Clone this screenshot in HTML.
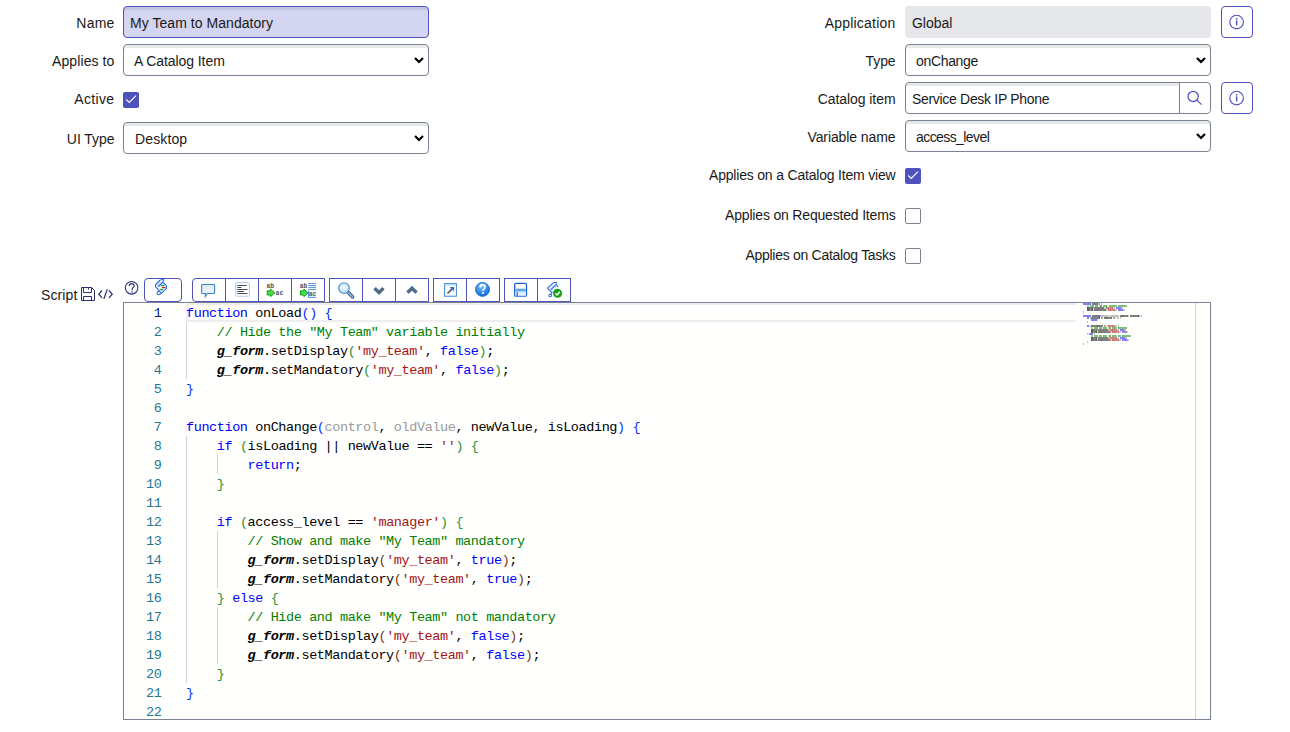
<!DOCTYPE html>
<html><head><meta charset="utf-8"><style>
html,body{margin:0;padding:0;background:#fff;width:1290px;height:732px;overflow:hidden;position:relative}
body{font-family:"Liberation Sans",sans-serif;color:#1e1e1e}
.t{position:absolute;font-size:14px;line-height:16px;height:16px;white-space:nowrap;color:#1a1a1a}
.r{text-align:right}
.box{position:absolute;box-sizing:border-box;border:1px solid #7b8292;border-radius:4px;background:#fff;box-shadow:inset 0 3px 0 #e8e9e9}
.chev{position:absolute;width:12px;height:8px}
.cb{position:absolute;box-sizing:border-box;width:16px;height:16px;border-radius:2px}
.cb.on{background:#4f52bd}
.cb.off{border:1px solid #7b8292;background:#fff}
.ibtn{position:absolute;box-sizing:border-box;width:32px;height:32px;border:1px solid #4f52bd;border-radius:4px;background:#fff}
.tb{position:absolute;top:278px;height:24px;box-sizing:border-box;border:1px solid #4f52bd;background:#fff}
.dv{position:absolute;top:278px;height:24px;width:1px;background:#4f52bd}
.code{position:absolute;left:186px;font-family:"Liberation Mono",monospace;font-size:13.5px;letter-spacing:-0.405px;line-height:19px;white-space:pre;color:#000}
.ln{position:absolute;left:123px;width:38.5px;text-align:right;font-family:"Liberation Mono",monospace;font-size:13.5px;letter-spacing:-0.405px;line-height:19px;color:#237893}
.k{color:#0000ff}.c{color:#008000}.s{color:#a31515}.b1{color:#0431fa}.b2{color:#319331}.b3{color:#7b3814}.u{color:#9a9a9a}.g{font-weight:bold;font-style:italic}
.guide{position:absolute;width:1px;background:#d3d3d3}
.mm i{position:absolute;height:2px;width:1px}
</style></head><body>
<div class="t r" style="left:-285.5px;width:400px;top:15px;letter-spacing:0.2px">Name</div>
<div class="box" style="left:123px;top:6px;width:306px;height:32px;border-color:#4f52bd;background:#d4d5f0;box-shadow:inset 0 3px 0 #c3c4df"></div>
<div class="t" style="left:130px;top:15px;letter-spacing:0.05px">My Team to Mandatory</div>
<div class="t r" style="left:-285.5px;width:400px;top:53px;letter-spacing:0.1px">Applies to</div>
<div class="box" style="left:123px;top:44px;width:306px;height:32px"></div>
<div class="t" style="left:134px;top:53px;letter-spacing:-0.08px">A Catalog Item</div>
<svg class="chev" style="left:413px;top:56px" viewBox="0 0 12 8"><path d="M2 2 L6 6 L10 2" fill="none" stroke="#000" stroke-width="2.2"/></svg>
<div class="t r" style="left:-285.5px;width:400px;top:91px;letter-spacing:0.35px">Active</div>
<div class="cb on" style="left:123px;top:92px"><svg width="16" height="16" viewBox="0 0 16 16" style="position:absolute;left:0;top:0"><path d="M3.3 7.5 L6.3 10.5 L13 3.7" fill="none" stroke="#fff" stroke-width="1.1"/></svg></div>
<div class="t r" style="left:-285.5px;width:400px;top:131px;letter-spacing:-0.05px">UI Type</div>
<div class="box" style="left:123px;top:122px;width:306px;height:32px"></div>
<div class="t" style="left:135px;top:131px;letter-spacing:0.12px">Desktop</div>
<svg class="chev" style="left:413px;top:134px" viewBox="0 0 12 8"><path d="M2 2 L6 6 L10 2" fill="none" stroke="#000" stroke-width="2.2"/></svg>
<div class="t r" style="left:495.5px;width:400px;top:15px;letter-spacing:0.21px">Application</div>
<div class="box" style="left:905px;top:6px;width:306px;height:32px;border:none;background:#e6e7ea;box-shadow:none"></div>
<div class="t" style="left:912px;top:15px;letter-spacing:-0.04px">Global</div>
<div class="ibtn" style="left:1221px;top:6px"><svg width="30" height="30" viewBox="0 0 30 30" style="position:absolute;left:0;top:0"><circle cx="14.6" cy="15.1" r="6.8" fill="none" stroke="#4f52bd" stroke-width="1.1"/><rect x="13.9" y="13.4" width="1.5" height="5" fill="#4f52bd"/><rect x="13.9" y="11" width="1.5" height="1.5" fill="#4f52bd"/></svg></div>
<div class="t r" style="left:495.5px;width:400px;top:53px;letter-spacing:-0.1px">Type</div>
<div class="box" style="left:905px;top:44px;width:306px;height:32px"></div>
<div class="t" style="left:916px;top:53px;letter-spacing:-0.33px">onChange</div>
<svg class="chev" style="left:1195px;top:56px" viewBox="0 0 12 8"><path d="M2 2 L6 6 L10 2" fill="none" stroke="#000" stroke-width="2.2"/></svg>
<div class="t r" style="left:495.5px;width:400px;top:91px;letter-spacing:-0.06px">Catalog item</div>
<div class="box" style="left:905px;top:82px;width:306px;height:32px"></div>
<div style="position:absolute;left:1179px;top:82px;width:1px;height:32px;background:#7b8292"></div>
<div style="position:absolute;left:1180px;top:83px;width:29px;height:30px;background:#fff;border-radius:0 3px 3px 0"></div>
<div class="t" style="left:912px;top:91px;letter-spacing:-0.31px">Service Desk IP Phone</div>
<svg style="position:absolute;left:1180px;top:83px" width="30" height="30" viewBox="0 0 30 30"><circle cx="13.1" cy="13.4" r="5.1" fill="none" stroke="#4f52bd" stroke-width="1.25"/><path d="M16.7 17 L21.6 21.6" stroke="#4f52bd" stroke-width="1.2"/></svg>
<div class="ibtn" style="left:1221px;top:82px"><svg width="30" height="30" viewBox="0 0 30 30" style="position:absolute;left:0;top:0"><circle cx="14.6" cy="15.1" r="6.8" fill="none" stroke="#4f52bd" stroke-width="1.1"/><rect x="13.9" y="13.4" width="1.5" height="5" fill="#4f52bd"/><rect x="13.9" y="11" width="1.5" height="1.5" fill="#4f52bd"/></svg></div>
<div class="t r" style="left:495.5px;width:400px;top:129px;letter-spacing:-0.09px">Variable name</div>
<div class="box" style="left:905px;top:120px;width:306px;height:32px"></div>
<div class="t" style="left:916px;top:129px;letter-spacing:-0.58px">access_level</div>
<svg class="chev" style="left:1195px;top:132px" viewBox="0 0 12 8"><path d="M2 2 L6 6 L10 2" fill="none" stroke="#000" stroke-width="2.2"/></svg>
<div class="t r" style="left:495.5px;width:400px;top:167px;letter-spacing:-0.19px">Applies on a Catalog Item view</div>
<div class="cb on" style="left:905px;top:168px"><svg width="16" height="16" viewBox="0 0 16 16" style="position:absolute;left:0;top:0"><path d="M3.3 7.5 L6.3 10.5 L13 3.7" fill="none" stroke="#fff" stroke-width="1.1"/></svg></div>
<div class="t r" style="left:495.5px;width:400px;top:207px;letter-spacing:-0.18px">Applies on Requested Items</div>
<div class="cb off" style="left:905px;top:208px"></div>
<div class="t r" style="left:495.5px;width:400px;top:247px;letter-spacing:-0.29px">Applies on Catalog Tasks</div>
<div class="cb off" style="left:905px;top:248px"></div>
<div class="t" style="left:41px;top:287px;letter-spacing:0.12px">Script</div>
<svg style="position:absolute;left:78px;top:284px" width="38" height="20" viewBox="78 284 38 20">
 <g fill="none" stroke="#2c2e6e" stroke-width="1">
  <path d="M81.5 287.5 H91.5 L94.5 290.5 V300.5 H81.5 Z"/>
  <path d="M83.5 287.5 V292.5 H91.5 V287.5"/>
  <path d="M88.5 287.5 V289.5"/>
  <path d="M83.5 300.5 V296.5 H91.5 V300.5"/>
  <path d="M102 290.5 L98.8 294.2 L102 297.8" stroke-width="1.25"/>
  <path d="M107.3 289.2 L103.8 299" stroke-width="1.2"/>
  <path d="M109 290.5 L112.2 294.2 L109 297.8" stroke-width="1.25"/>
 </g>
</svg>
<svg style="position:absolute;left:120px;top:276px" width="24" height="24" viewBox="120 276 24 24">
 <circle cx="131.6" cy="287.8" r="6.3" fill="none" stroke="#2c2e6e" stroke-width="1.1"/>
 <path d="M129.2 286 C129.2 284.2 130.3 283.6 131.7 283.6 C133.2 283.6 134.1 284.5 134.1 285.7 C134.1 287.3 132 287.6 132 289.6 V290.2" fill="none" stroke="#2c2e6e" stroke-width="1.1"/>
 <rect x="131.4" y="291.3" width="1.3" height="1.3" fill="#2c2e6e"/>
</svg>
<div class="tb" style="left:144px;width:38px;border-radius:4px"></div>
<div class="tb" style="left:192px;width:133px;border-radius:4px 0 0 4px"></div>
<div class="dv" style="left:225px"></div><div class="dv" style="left:258px"></div><div class="dv" style="left:291px"></div>
<div class="tb" style="left:329px;width:100px"></div>
<div class="dv" style="left:362px"></div><div class="dv" style="left:395px"></div>
<div class="tb" style="left:433px;width:67px"></div>
<div class="dv" style="left:466px"></div>
<div class="tb" style="left:504px;width:67px"></div>
<div class="dv" style="left:537px"></div>
<svg style="position:absolute;left:140px;top:276px" width="440" height="24" viewBox="140 276 440 24">
 <defs>
  <linearGradient id="lb" x1="0" y1="0" x2="0" y2="1"><stop offset="0" stop-color="#dce9f8"/><stop offset="1" stop-color="#f4f8fd"/></linearGradient>
  <radialGradient id="mg" cx="0.5" cy="0.45" r="0.6"><stop offset="0" stop-color="#ffffff"/><stop offset="1" stop-color="#a8d0f4"/></radialGradient>
  <radialGradient id="hg" cx="0.45" cy="0.3" r="0.7"><stop offset="0" stop-color="#7cc4ff"/><stop offset="1" stop-color="#0a68d8"/></radialGradient>
 </defs>
 <!-- G1 script scroll icon -->
 <path d="M160.2 280 L155.5 284.6 L155.5 286.8 L159.6 290.8 L160.6 293.8 L166.5 288.6 L166.5 286 L163.4 282.6 Z" fill="#e6effc"/>
 <path d="M160.5 279.4 L163.8 279.6 L164.2 281.6 L158.4 286.6 L155.8 285 Z" fill="#cfe0fa"/>
 <g stroke="#1f66e0" stroke-width="1.05" fill="none">
  <path d="M160.2 280 L155.5 284.6 L155.5 286.8 L159.6 290.8"/>
  <path d="M163.4 282.6 L166.5 286 L166.5 288.6 L160.6 293.8"/>
  <path d="M160.4 279.3 H163.6 V281.6"/>
  <path d="M163.6 281.6 L158.3 286.5"/>
  <circle cx="158.7" cy="293" r="1.7"/>
 </g>
 <rect x="160.9" y="285" width="3.2" height="1.2" fill="#12b012"/>
 <rect x="162.1" y="287" width="3.2" height="1.2" fill="#e01a10"/>
 <rect x="160" y="289" width="3.2" height="1.2" fill="#12b012"/>
 <!-- comment bubble -->
 <path d="M202.3 284.5 H214 Q214.6 284.5 214.6 285.2 V292.8 Q214.6 293.5 214 293.5 H207.3 L205.3 296.5 L205.5 293.5 H202.3 Q201.6 293.5 201.6 292.8 V285.2 Q201.6 284.5 202.3 284.5 Z" fill="url(#lb)" stroke="#3b84cf" stroke-width="1.1"/>
 <!-- format box -->
 <rect x="235.8" y="282.6" width="13.6" height="13.6" rx="1" fill="#fff" stroke="#a9c9f5" stroke-width="1"/>
 <g stroke="#4a4a4a" stroke-width="1">
  <path d="M237.3 285.5 H246.8"/><path d="M237.3 287.5 H241.5"/><path d="M237.3 289.5 H247.5"/><path d="M237.3 291.5 H244"/><path d="M237.3 293.5 H247.5"/>
 </g>
 <!-- ab ac -->
 <g font-family="Liberation Mono" font-size="7.8" font-weight="bold" fill="#505050">
  <text x="266.4" y="288" textLength="7.6" lengthAdjust="spacingAndGlyphs">ab</text>
  <text x="275.6" y="295.2" textLength="7.6" lengthAdjust="spacingAndGlyphs">ac</text>
  <text x="299.8" y="288" textLength="7.6" lengthAdjust="spacingAndGlyphs">ab</text>
  <text x="308.8" y="296" textLength="7.6" lengthAdjust="spacingAndGlyphs">ac</text>
 </g>
 <path d="M267.2 290.8 H270.6 V289.2 L274.8 292.9 L270.6 296.6 V295 H267.2 Z" fill="#52d852" stroke="#0da00d" stroke-width="1"/>
 <path d="M300.5 290.8 H303.9 V289.2 L308.1 292.9 L303.9 296.6 V295 H300.5 Z" fill="#52d852" stroke="#0da00d" stroke-width="1"/>
 <g stroke="#3b84cf" stroke-width="0.9"><path d="M308.3 283.6 H316"/><path d="M308.3 285.6 H316"/><path d="M308.3 287.6 H316"/><path d="M308.3 289.6 H316"/></g>
 <path d="M308.6 290.5 V297.4 H316" fill="none" stroke="#2e7be0" stroke-width="0.9"/>
 <!-- magnifier -->
 <path d="M348 292 L352.6 297" stroke="#4a4a4a" stroke-width="3.4" stroke-linecap="round"/>
 <path d="M348 292 L352.6 297" stroke="#6eaee8" stroke-width="2" stroke-linecap="round"/>
 <circle cx="344" cy="288.1" r="5.4" fill="url(#mg)" stroke="#4f8fcf" stroke-width="1.1"/>
 <!-- chevrons -->
 <path d="M374.6 288.3 L379 292.6 L383.4 288.3" fill="none" stroke="#2f7fdf" stroke-width="3.6" stroke-linejoin="miter"/>
 <path d="M374.6 288.3 L379 292.6 L383.4 288.3" fill="none" stroke="#666" stroke-width="2.2"/>
 <path d="M407.6 292.6 L412 288.2 L416.4 292.6" fill="none" stroke="#2f7fdf" stroke-width="3.6"/>
 <path d="M407.6 292.6 L412 288.2 L416.4 292.6" fill="none" stroke="#666" stroke-width="2.2"/>
 <!-- external -->
 <rect x="444.6" y="283.6" width="11.8" height="12.6" fill="#fff" stroke="#3e86d8" stroke-width="1"/>
 <rect x="445.1" y="284.1" width="10.8" height="1.6" fill="#bde0fb"/>
 <path d="M447.5 293.5 L452.5 288.3" stroke="#4f5a6a" stroke-width="1.7"/>
 <path d="M449.6 287 H454.2 V291.6 Z" fill="#3370b8"/>
 <!-- help -->
 <circle cx="482.5" cy="289.4" r="7" fill="url(#hg)" stroke="#1d63c8" stroke-width="0.8"/>
 <path d="M480 287.4 C480 285.6 481.2 284.9 482.6 284.9 C484.2 284.9 485.1 285.8 485.1 287 C485.1 288.7 483 288.8 483 290.9" fill="none" stroke="#fff" stroke-width="1.6"/>
 <rect x="482.1" y="292.1" width="1.8" height="1.8" fill="#fff"/>
 <!-- save -->
 <rect x="514.7" y="283.4" width="11.8" height="12.8" rx="1.2" fill="#fff" stroke="#1d63d6" stroke-width="1.3"/>
 <rect x="515.4" y="288.1" width="10.4" height="0.9" fill="#d3dbe6"/>
 <rect x="515.4" y="289" width="10.4" height="2.7" fill="#58acf4"/>
 <rect x="515.4" y="291.7" width="10.4" height="4" fill="#e2edfa"/>
 <rect x="516.6" y="292.2" width="1.2" height="3.8" fill="#1d63d6"/>
 <!-- validate scroll -->
 <path d="M553.6 282.6 L547.8 287.7 L552.3 292.4 L557.6 287.2 Z" fill="#dfeafb"/>
 <g stroke="#1f66e0" stroke-width="1.05" fill="none">
  <path d="M553.6 282.6 L547.8 287.7 L547.8 288.6 L552 292.6 L550.6 294.4"/>
  <path d="M553.6 282.5 H556.3 V284.6 L550.8 289.6"/>
  <path d="M556.6 285.3 L558 286.9"/>
  <circle cx="550.2" cy="295.5" r="1.3"/>
 </g>
 <circle cx="557.6" cy="293.3" r="4.5" fill="#16a016"/>
 <path d="M555.4 293.3 L557.1 295 L559.9 291.7" fill="none" stroke="#fff" stroke-width="1.4"/>
</svg>

<div style="position:absolute;left:123px;top:302px;width:1088px;height:418px;box-sizing:border-box;border:1px solid #7b8292;background:#fffffe"></div>
<div style="position:absolute;left:186px;top:303px;width:890px;height:19px;box-sizing:border-box;border:2px solid #eeeeee;border-right:none"></div>
<div class="guide" style="left:186px;top:322px;height:57px"></div>
<div class="guide" style="left:186px;top:436px;height:247px"></div>
<div class="guide" style="left:217px;top:455px;height:19px"></div>
<div class="guide" style="left:217px;top:531px;height:57px"></div>
<div class="guide" style="left:217px;top:607px;height:57px"></div>
<div class="ln" style="top:304px;color:#0b216f">1</div>
<div class="ln" style="top:323px;color:#237893">2</div>
<div class="ln" style="top:342px;color:#237893">3</div>
<div class="ln" style="top:361px;color:#237893">4</div>
<div class="ln" style="top:380px;color:#237893">5</div>
<div class="ln" style="top:399px;color:#237893">6</div>
<div class="ln" style="top:418px;color:#237893">7</div>
<div class="ln" style="top:437px;color:#237893">8</div>
<div class="ln" style="top:456px;color:#237893">9</div>
<div class="ln" style="top:475px;color:#237893">10</div>
<div class="ln" style="top:494px;color:#237893">11</div>
<div class="ln" style="top:513px;color:#237893">12</div>
<div class="ln" style="top:532px;color:#237893">13</div>
<div class="ln" style="top:551px;color:#237893">14</div>
<div class="ln" style="top:570px;color:#237893">15</div>
<div class="ln" style="top:589px;color:#237893">16</div>
<div class="ln" style="top:608px;color:#237893">17</div>
<div class="ln" style="top:627px;color:#237893">18</div>
<div class="ln" style="top:646px;color:#237893">19</div>
<div class="ln" style="top:665px;color:#237893">20</div>
<div class="ln" style="top:684px;color:#237893">21</div>
<div class="ln" style="top:703px;color:#237893">22</div>
<div class="code" style="top:304px"><span class="k">function</span> onLoad<span class="b1">()</span> <span class="b1">{</span>
    <span class="c">// Hide the "My Team" variable initially</span>
    <span class="g">g_form</span>.setDisplay<span class="b2">(</span><span class="s">'my_team'</span>, <span class="k">false</span><span class="b2">)</span>;
    <span class="g">g_form</span>.setMandatory<span class="b2">(</span><span class="s">'my_team'</span>, <span class="k">false</span><span class="b2">)</span>;
<span class="b1">}</span>

<span class="k">function</span> onChange<span class="b1">(</span><span class="u">control</span>, <span class="u">oldValue</span>, newValue, isLoading<span class="b1">)</span> <span class="b1">{</span>
    <span class="k">if</span> <span class="b2">(</span>isLoading || newValue == <span class="s">''</span><span class="b2">)</span> <span class="b2">{</span>
        <span class="k">return</span>;
    <span class="b2">}</span>

    <span class="k">if</span> <span class="b2">(</span>access_level == <span class="s">'manager'</span><span class="b2">)</span> <span class="b2">{</span>
        <span class="c">// Show and make "My Team" mandatory</span>
        <span class="g">g_form</span>.setDisplay<span class="b3">(</span><span class="s">'my_team'</span>, <span class="k">true</span><span class="b3">)</span>;
        <span class="g">g_form</span>.setMandatory<span class="b3">(</span><span class="s">'my_team'</span>, <span class="k">true</span><span class="b3">)</span>;
    <span class="b2">}</span> <span class="k">else</span> <span class="b2">{</span>
        <span class="c">// Hide and make "My Team" not mandatory</span>
        <span class="g">g_form</span>.setDisplay<span class="b3">(</span><span class="s">'my_team'</span>, <span class="k">false</span><span class="b3">)</span>;
        <span class="g">g_form</span>.setMandatory<span class="b3">(</span><span class="s">'my_team'</span>, <span class="k">false</span><span class="b3">)</span>;
    <span class="b2">}</span>
<span class="b1">}</span>
</div>
<div class="mm"><i style="left:1083px;top:303px;background:#0000ff;opacity:0.5"></i><i style="left:1084px;top:303px;background:#0000ff;opacity:0.5"></i><i style="left:1085px;top:303px;background:#0000ff;opacity:0.5"></i><i style="left:1086px;top:303px;background:#0000ff;opacity:0.5"></i><i style="left:1087px;top:303px;background:#0000ff;opacity:0.5"></i><i style="left:1088px;top:303px;background:#0000ff;opacity:0.5"></i><i style="left:1089px;top:303px;background:#0000ff;opacity:0.5"></i><i style="left:1090px;top:303px;background:#0000ff;opacity:0.5"></i><i style="left:1092px;top:303px;background:#000000;opacity:0.5"></i><i style="left:1093px;top:303px;background:#000000;opacity:0.5"></i><i style="left:1094px;top:303px;background:#000000;opacity:0.5"></i><i style="left:1095px;top:303px;background:#000000;opacity:0.5"></i><i style="left:1096px;top:303px;background:#000000;opacity:0.5"></i><i style="left:1097px;top:303px;background:#000000;opacity:0.5"></i><i style="left:1098px;top:303px;background:#0431fa;opacity:0.4"></i><i style="left:1099px;top:303px;background:#0431fa;opacity:0.4"></i><i style="left:1101px;top:303px;background:#0431fa;opacity:0.4"></i><i style="left:1087px;top:305px;background:#008000;opacity:0.35"></i><i style="left:1088px;top:305px;background:#008000;opacity:0.35"></i><i style="left:1090px;top:305px;background:#008000;opacity:0.5"></i><i style="left:1091px;top:305px;background:#008000;opacity:0.5"></i><i style="left:1092px;top:305px;background:#008000;opacity:0.5"></i><i style="left:1093px;top:305px;background:#008000;opacity:0.5"></i><i style="left:1095px;top:305px;background:#008000;opacity:0.5"></i><i style="left:1096px;top:305px;background:#008000;opacity:0.5"></i><i style="left:1097px;top:305px;background:#008000;opacity:0.5"></i><i style="left:1099px;top:305px;background:#008000;opacity:0.22"></i><i style="left:1100px;top:305px;background:#008000;opacity:0.62"></i><i style="left:1101px;top:305px;background:#008000;opacity:0.5"></i><i style="left:1103px;top:305px;background:#008000;opacity:0.5"></i><i style="left:1104px;top:305px;background:#008000;opacity:0.5"></i><i style="left:1105px;top:305px;background:#008000;opacity:0.5"></i><i style="left:1106px;top:305px;background:#008000;opacity:0.62"></i><i style="left:1107px;top:305px;background:#008000;opacity:0.22"></i><i style="left:1109px;top:305px;background:#008000;opacity:0.5"></i><i style="left:1110px;top:305px;background:#008000;opacity:0.5"></i><i style="left:1111px;top:305px;background:#008000;opacity:0.5"></i><i style="left:1112px;top:305px;background:#008000;opacity:0.5"></i><i style="left:1113px;top:305px;background:#008000;opacity:0.5"></i><i style="left:1114px;top:305px;background:#008000;opacity:0.5"></i><i style="left:1115px;top:305px;background:#008000;opacity:0.5"></i><i style="left:1116px;top:305px;background:#008000;opacity:0.5"></i><i style="left:1118px;top:305px;background:#008000;opacity:0.5"></i><i style="left:1119px;top:305px;background:#008000;opacity:0.5"></i><i style="left:1120px;top:305px;background:#008000;opacity:0.5"></i><i style="left:1121px;top:305px;background:#008000;opacity:0.5"></i><i style="left:1122px;top:305px;background:#008000;opacity:0.5"></i><i style="left:1123px;top:305px;background:#008000;opacity:0.5"></i><i style="left:1124px;top:305px;background:#008000;opacity:0.5"></i><i style="left:1125px;top:305px;background:#008000;opacity:0.5"></i><i style="left:1126px;top:305px;background:#008000;opacity:0.5"></i><i style="left:1087px;top:307px;background:#000000;opacity:0.62"></i><i style="left:1088px;top:307px;background:#000000;opacity:0.62"></i><i style="left:1089px;top:307px;background:#000000;opacity:0.5"></i><i style="left:1090px;top:307px;background:#000000;opacity:0.5"></i><i style="left:1091px;top:307px;background:#000000;opacity:0.5"></i><i style="left:1092px;top:307px;background:#000000;opacity:0.62"></i><i style="left:1093px;top:307px;background:#000000;opacity:0.22"></i><i style="left:1094px;top:307px;background:#000000;opacity:0.5"></i><i style="left:1095px;top:307px;background:#000000;opacity:0.5"></i><i style="left:1096px;top:307px;background:#000000;opacity:0.5"></i><i style="left:1097px;top:307px;background:#000000;opacity:0.5"></i><i style="left:1098px;top:307px;background:#000000;opacity:0.5"></i><i style="left:1099px;top:307px;background:#000000;opacity:0.5"></i><i style="left:1100px;top:307px;background:#000000;opacity:0.5"></i><i style="left:1101px;top:307px;background:#000000;opacity:0.5"></i><i style="left:1102px;top:307px;background:#000000;opacity:0.5"></i><i style="left:1103px;top:307px;background:#000000;opacity:0.5"></i><i style="left:1104px;top:307px;background:#319331;opacity:0.4"></i><i style="left:1105px;top:307px;background:#a31515;opacity:0.22"></i><i style="left:1106px;top:307px;background:#a31515;opacity:0.62"></i><i style="left:1107px;top:307px;background:#a31515;opacity:0.5"></i><i style="left:1108px;top:307px;background:#a31515;opacity:0.62"></i><i style="left:1109px;top:307px;background:#a31515;opacity:0.5"></i><i style="left:1110px;top:307px;background:#a31515;opacity:0.5"></i><i style="left:1111px;top:307px;background:#a31515;opacity:0.5"></i><i style="left:1112px;top:307px;background:#a31515;opacity:0.62"></i><i style="left:1113px;top:307px;background:#a31515;opacity:0.22"></i><i style="left:1114px;top:307px;background:#000000;opacity:0.22"></i><i style="left:1116px;top:307px;background:#0000ff;opacity:0.5"></i><i style="left:1117px;top:307px;background:#0000ff;opacity:0.5"></i><i style="left:1118px;top:307px;background:#0000ff;opacity:0.5"></i><i style="left:1119px;top:307px;background:#0000ff;opacity:0.5"></i><i style="left:1120px;top:307px;background:#0000ff;opacity:0.5"></i><i style="left:1121px;top:307px;background:#319331;opacity:0.4"></i><i style="left:1122px;top:307px;background:#000000;opacity:0.22"></i><i style="left:1087px;top:309px;background:#000000;opacity:0.62"></i><i style="left:1088px;top:309px;background:#000000;opacity:0.62"></i><i style="left:1089px;top:309px;background:#000000;opacity:0.5"></i><i style="left:1090px;top:309px;background:#000000;opacity:0.5"></i><i style="left:1091px;top:309px;background:#000000;opacity:0.5"></i><i style="left:1092px;top:309px;background:#000000;opacity:0.62"></i><i style="left:1093px;top:309px;background:#000000;opacity:0.22"></i><i style="left:1094px;top:309px;background:#000000;opacity:0.5"></i><i style="left:1095px;top:309px;background:#000000;opacity:0.5"></i><i style="left:1096px;top:309px;background:#000000;opacity:0.5"></i><i style="left:1097px;top:309px;background:#000000;opacity:0.62"></i><i style="left:1098px;top:309px;background:#000000;opacity:0.5"></i><i style="left:1099px;top:309px;background:#000000;opacity:0.5"></i><i style="left:1100px;top:309px;background:#000000;opacity:0.5"></i><i style="left:1101px;top:309px;background:#000000;opacity:0.5"></i><i style="left:1102px;top:309px;background:#000000;opacity:0.5"></i><i style="left:1103px;top:309px;background:#000000;opacity:0.5"></i><i style="left:1104px;top:309px;background:#000000;opacity:0.5"></i><i style="left:1105px;top:309px;background:#000000;opacity:0.5"></i><i style="left:1106px;top:309px;background:#319331;opacity:0.4"></i><i style="left:1107px;top:309px;background:#a31515;opacity:0.22"></i><i style="left:1108px;top:309px;background:#a31515;opacity:0.62"></i><i style="left:1109px;top:309px;background:#a31515;opacity:0.5"></i><i style="left:1110px;top:309px;background:#a31515;opacity:0.62"></i><i style="left:1111px;top:309px;background:#a31515;opacity:0.5"></i><i style="left:1112px;top:309px;background:#a31515;opacity:0.5"></i><i style="left:1113px;top:309px;background:#a31515;opacity:0.5"></i><i style="left:1114px;top:309px;background:#a31515;opacity:0.62"></i><i style="left:1115px;top:309px;background:#a31515;opacity:0.22"></i><i style="left:1116px;top:309px;background:#000000;opacity:0.22"></i><i style="left:1118px;top:309px;background:#0000ff;opacity:0.5"></i><i style="left:1119px;top:309px;background:#0000ff;opacity:0.5"></i><i style="left:1120px;top:309px;background:#0000ff;opacity:0.5"></i><i style="left:1121px;top:309px;background:#0000ff;opacity:0.5"></i><i style="left:1122px;top:309px;background:#0000ff;opacity:0.5"></i><i style="left:1123px;top:309px;background:#319331;opacity:0.4"></i><i style="left:1124px;top:309px;background:#000000;opacity:0.22"></i><i style="left:1083px;top:311px;background:#0431fa;opacity:0.4"></i><i style="left:1083px;top:315px;background:#0000ff;opacity:0.5"></i><i style="left:1084px;top:315px;background:#0000ff;opacity:0.5"></i><i style="left:1085px;top:315px;background:#0000ff;opacity:0.5"></i><i style="left:1086px;top:315px;background:#0000ff;opacity:0.5"></i><i style="left:1087px;top:315px;background:#0000ff;opacity:0.5"></i><i style="left:1088px;top:315px;background:#0000ff;opacity:0.5"></i><i style="left:1089px;top:315px;background:#0000ff;opacity:0.5"></i><i style="left:1090px;top:315px;background:#0000ff;opacity:0.5"></i><i style="left:1092px;top:315px;background:#000000;opacity:0.5"></i><i style="left:1093px;top:315px;background:#000000;opacity:0.5"></i><i style="left:1094px;top:315px;background:#000000;opacity:0.5"></i><i style="left:1095px;top:315px;background:#000000;opacity:0.5"></i><i style="left:1096px;top:315px;background:#000000;opacity:0.5"></i><i style="left:1097px;top:315px;background:#000000;opacity:0.5"></i><i style="left:1098px;top:315px;background:#000000;opacity:0.62"></i><i style="left:1099px;top:315px;background:#000000;opacity:0.5"></i><i style="left:1100px;top:315px;background:#0431fa;opacity:0.4"></i><i style="left:1101px;top:315px;background:#808080;opacity:0.5"></i><i style="left:1102px;top:315px;background:#808080;opacity:0.5"></i><i style="left:1103px;top:315px;background:#808080;opacity:0.5"></i><i style="left:1104px;top:315px;background:#808080;opacity:0.5"></i><i style="left:1105px;top:315px;background:#808080;opacity:0.5"></i><i style="left:1106px;top:315px;background:#808080;opacity:0.5"></i><i style="left:1107px;top:315px;background:#808080;opacity:0.5"></i><i style="left:1108px;top:315px;background:#000000;opacity:0.22"></i><i style="left:1110px;top:315px;background:#808080;opacity:0.5"></i><i style="left:1111px;top:315px;background:#808080;opacity:0.5"></i><i style="left:1112px;top:315px;background:#808080;opacity:0.5"></i><i style="left:1113px;top:315px;background:#808080;opacity:0.5"></i><i style="left:1114px;top:315px;background:#808080;opacity:0.5"></i><i style="left:1115px;top:315px;background:#808080;opacity:0.5"></i><i style="left:1116px;top:315px;background:#808080;opacity:0.5"></i><i style="left:1117px;top:315px;background:#808080;opacity:0.5"></i><i style="left:1118px;top:315px;background:#000000;opacity:0.22"></i><i style="left:1120px;top:315px;background:#000000;opacity:0.5"></i><i style="left:1121px;top:315px;background:#000000;opacity:0.5"></i><i style="left:1122px;top:315px;background:#000000;opacity:0.62"></i><i style="left:1123px;top:315px;background:#000000;opacity:0.5"></i><i style="left:1124px;top:315px;background:#000000;opacity:0.5"></i><i style="left:1125px;top:315px;background:#000000;opacity:0.5"></i><i style="left:1126px;top:315px;background:#000000;opacity:0.5"></i><i style="left:1127px;top:315px;background:#000000;opacity:0.5"></i><i style="left:1128px;top:315px;background:#000000;opacity:0.22"></i><i style="left:1130px;top:315px;background:#000000;opacity:0.5"></i><i style="left:1131px;top:315px;background:#000000;opacity:0.5"></i><i style="left:1132px;top:315px;background:#000000;opacity:0.5"></i><i style="left:1133px;top:315px;background:#000000;opacity:0.5"></i><i style="left:1134px;top:315px;background:#000000;opacity:0.5"></i><i style="left:1135px;top:315px;background:#000000;opacity:0.5"></i><i style="left:1136px;top:315px;background:#000000;opacity:0.5"></i><i style="left:1137px;top:315px;background:#000000;opacity:0.5"></i><i style="left:1138px;top:315px;background:#000000;opacity:0.62"></i><i style="left:1139px;top:315px;background:#0431fa;opacity:0.4"></i><i style="left:1141px;top:315px;background:#0431fa;opacity:0.4"></i><i style="left:1087px;top:317px;background:#0000ff;opacity:0.5"></i><i style="left:1088px;top:317px;background:#0000ff;opacity:0.5"></i><i style="left:1090px;top:317px;background:#319331;opacity:0.4"></i><i style="left:1091px;top:317px;background:#000000;opacity:0.5"></i><i style="left:1092px;top:317px;background:#000000;opacity:0.5"></i><i style="left:1093px;top:317px;background:#000000;opacity:0.5"></i><i style="left:1094px;top:317px;background:#000000;opacity:0.5"></i><i style="left:1095px;top:317px;background:#000000;opacity:0.5"></i><i style="left:1096px;top:317px;background:#000000;opacity:0.5"></i><i style="left:1097px;top:317px;background:#000000;opacity:0.5"></i><i style="left:1098px;top:317px;background:#000000;opacity:0.5"></i><i style="left:1099px;top:317px;background:#000000;opacity:0.62"></i><i style="left:1101px;top:317px;background:#000000;opacity:0.35"></i><i style="left:1102px;top:317px;background:#000000;opacity:0.35"></i><i style="left:1104px;top:317px;background:#000000;opacity:0.5"></i><i style="left:1105px;top:317px;background:#000000;opacity:0.5"></i><i style="left:1106px;top:317px;background:#000000;opacity:0.62"></i><i style="left:1107px;top:317px;background:#000000;opacity:0.5"></i><i style="left:1108px;top:317px;background:#000000;opacity:0.5"></i><i style="left:1109px;top:317px;background:#000000;opacity:0.5"></i><i style="left:1110px;top:317px;background:#000000;opacity:0.5"></i><i style="left:1111px;top:317px;background:#000000;opacity:0.5"></i><i style="left:1113px;top:317px;background:#000000;opacity:0.35"></i><i style="left:1114px;top:317px;background:#000000;opacity:0.35"></i><i style="left:1116px;top:317px;background:#a31515;opacity:0.22"></i><i style="left:1117px;top:317px;background:#a31515;opacity:0.22"></i><i style="left:1118px;top:317px;background:#319331;opacity:0.4"></i><i style="left:1120px;top:317px;background:#319331;opacity:0.4"></i><i style="left:1091px;top:319px;background:#0000ff;opacity:0.5"></i><i style="left:1092px;top:319px;background:#0000ff;opacity:0.5"></i><i style="left:1093px;top:319px;background:#0000ff;opacity:0.5"></i><i style="left:1094px;top:319px;background:#0000ff;opacity:0.5"></i><i style="left:1095px;top:319px;background:#0000ff;opacity:0.5"></i><i style="left:1096px;top:319px;background:#0000ff;opacity:0.5"></i><i style="left:1097px;top:319px;background:#000000;opacity:0.22"></i><i style="left:1087px;top:321px;background:#319331;opacity:0.4"></i><i style="left:1087px;top:325px;background:#0000ff;opacity:0.5"></i><i style="left:1088px;top:325px;background:#0000ff;opacity:0.5"></i><i style="left:1090px;top:325px;background:#319331;opacity:0.4"></i><i style="left:1091px;top:325px;background:#000000;opacity:0.5"></i><i style="left:1092px;top:325px;background:#000000;opacity:0.5"></i><i style="left:1093px;top:325px;background:#000000;opacity:0.5"></i><i style="left:1094px;top:325px;background:#000000;opacity:0.5"></i><i style="left:1095px;top:325px;background:#000000;opacity:0.5"></i><i style="left:1096px;top:325px;background:#000000;opacity:0.5"></i><i style="left:1097px;top:325px;background:#000000;opacity:0.62"></i><i style="left:1098px;top:325px;background:#000000;opacity:0.5"></i><i style="left:1099px;top:325px;background:#000000;opacity:0.5"></i><i style="left:1100px;top:325px;background:#000000;opacity:0.5"></i><i style="left:1101px;top:325px;background:#000000;opacity:0.5"></i><i style="left:1102px;top:325px;background:#000000;opacity:0.5"></i><i style="left:1104px;top:325px;background:#000000;opacity:0.35"></i><i style="left:1105px;top:325px;background:#000000;opacity:0.35"></i><i style="left:1107px;top:325px;background:#a31515;opacity:0.22"></i><i style="left:1108px;top:325px;background:#a31515;opacity:0.62"></i><i style="left:1109px;top:325px;background:#a31515;opacity:0.5"></i><i style="left:1110px;top:325px;background:#a31515;opacity:0.5"></i><i style="left:1111px;top:325px;background:#a31515;opacity:0.5"></i><i style="left:1112px;top:325px;background:#a31515;opacity:0.62"></i><i style="left:1113px;top:325px;background:#a31515;opacity:0.5"></i><i style="left:1114px;top:325px;background:#a31515;opacity:0.5"></i><i style="left:1115px;top:325px;background:#a31515;opacity:0.22"></i><i style="left:1116px;top:325px;background:#319331;opacity:0.4"></i><i style="left:1118px;top:325px;background:#319331;opacity:0.4"></i><i style="left:1091px;top:327px;background:#008000;opacity:0.35"></i><i style="left:1092px;top:327px;background:#008000;opacity:0.35"></i><i style="left:1094px;top:327px;background:#008000;opacity:0.5"></i><i style="left:1095px;top:327px;background:#008000;opacity:0.5"></i><i style="left:1096px;top:327px;background:#008000;opacity:0.5"></i><i style="left:1097px;top:327px;background:#008000;opacity:0.62"></i><i style="left:1099px;top:327px;background:#008000;opacity:0.5"></i><i style="left:1100px;top:327px;background:#008000;opacity:0.5"></i><i style="left:1101px;top:327px;background:#008000;opacity:0.5"></i><i style="left:1103px;top:327px;background:#008000;opacity:0.62"></i><i style="left:1104px;top:327px;background:#008000;opacity:0.5"></i><i style="left:1105px;top:327px;background:#008000;opacity:0.5"></i><i style="left:1106px;top:327px;background:#008000;opacity:0.5"></i><i style="left:1108px;top:327px;background:#008000;opacity:0.22"></i><i style="left:1109px;top:327px;background:#008000;opacity:0.62"></i><i style="left:1110px;top:327px;background:#008000;opacity:0.5"></i><i style="left:1112px;top:327px;background:#008000;opacity:0.5"></i><i style="left:1113px;top:327px;background:#008000;opacity:0.5"></i><i style="left:1114px;top:327px;background:#008000;opacity:0.5"></i><i style="left:1115px;top:327px;background:#008000;opacity:0.62"></i><i style="left:1116px;top:327px;background:#008000;opacity:0.22"></i><i style="left:1118px;top:327px;background:#008000;opacity:0.62"></i><i style="left:1119px;top:327px;background:#008000;opacity:0.5"></i><i style="left:1120px;top:327px;background:#008000;opacity:0.5"></i><i style="left:1121px;top:327px;background:#008000;opacity:0.5"></i><i style="left:1122px;top:327px;background:#008000;opacity:0.5"></i><i style="left:1123px;top:327px;background:#008000;opacity:0.5"></i><i style="left:1124px;top:327px;background:#008000;opacity:0.5"></i><i style="left:1125px;top:327px;background:#008000;opacity:0.5"></i><i style="left:1126px;top:327px;background:#008000;opacity:0.5"></i><i style="left:1091px;top:329px;background:#000000;opacity:0.62"></i><i style="left:1092px;top:329px;background:#000000;opacity:0.62"></i><i style="left:1093px;top:329px;background:#000000;opacity:0.5"></i><i style="left:1094px;top:329px;background:#000000;opacity:0.5"></i><i style="left:1095px;top:329px;background:#000000;opacity:0.5"></i><i style="left:1096px;top:329px;background:#000000;opacity:0.62"></i><i style="left:1097px;top:329px;background:#000000;opacity:0.22"></i><i style="left:1098px;top:329px;background:#000000;opacity:0.5"></i><i style="left:1099px;top:329px;background:#000000;opacity:0.5"></i><i style="left:1100px;top:329px;background:#000000;opacity:0.5"></i><i style="left:1101px;top:329px;background:#000000;opacity:0.5"></i><i style="left:1102px;top:329px;background:#000000;opacity:0.5"></i><i style="left:1103px;top:329px;background:#000000;opacity:0.5"></i><i style="left:1104px;top:329px;background:#000000;opacity:0.5"></i><i style="left:1105px;top:329px;background:#000000;opacity:0.5"></i><i style="left:1106px;top:329px;background:#000000;opacity:0.5"></i><i style="left:1107px;top:329px;background:#000000;opacity:0.5"></i><i style="left:1108px;top:329px;background:#7b3814;opacity:0.4"></i><i style="left:1109px;top:329px;background:#a31515;opacity:0.22"></i><i style="left:1110px;top:329px;background:#a31515;opacity:0.62"></i><i style="left:1111px;top:329px;background:#a31515;opacity:0.5"></i><i style="left:1112px;top:329px;background:#a31515;opacity:0.62"></i><i style="left:1113px;top:329px;background:#a31515;opacity:0.5"></i><i style="left:1114px;top:329px;background:#a31515;opacity:0.5"></i><i style="left:1115px;top:329px;background:#a31515;opacity:0.5"></i><i style="left:1116px;top:329px;background:#a31515;opacity:0.62"></i><i style="left:1117px;top:329px;background:#a31515;opacity:0.22"></i><i style="left:1118px;top:329px;background:#000000;opacity:0.22"></i><i style="left:1120px;top:329px;background:#0000ff;opacity:0.5"></i><i style="left:1121px;top:329px;background:#0000ff;opacity:0.5"></i><i style="left:1122px;top:329px;background:#0000ff;opacity:0.5"></i><i style="left:1123px;top:329px;background:#0000ff;opacity:0.5"></i><i style="left:1124px;top:329px;background:#7b3814;opacity:0.4"></i><i style="left:1125px;top:329px;background:#000000;opacity:0.22"></i><i style="left:1091px;top:331px;background:#000000;opacity:0.62"></i><i style="left:1092px;top:331px;background:#000000;opacity:0.62"></i><i style="left:1093px;top:331px;background:#000000;opacity:0.5"></i><i style="left:1094px;top:331px;background:#000000;opacity:0.5"></i><i style="left:1095px;top:331px;background:#000000;opacity:0.5"></i><i style="left:1096px;top:331px;background:#000000;opacity:0.62"></i><i style="left:1097px;top:331px;background:#000000;opacity:0.22"></i><i style="left:1098px;top:331px;background:#000000;opacity:0.5"></i><i style="left:1099px;top:331px;background:#000000;opacity:0.5"></i><i style="left:1100px;top:331px;background:#000000;opacity:0.5"></i><i style="left:1101px;top:331px;background:#000000;opacity:0.62"></i><i style="left:1102px;top:331px;background:#000000;opacity:0.5"></i><i style="left:1103px;top:331px;background:#000000;opacity:0.5"></i><i style="left:1104px;top:331px;background:#000000;opacity:0.5"></i><i style="left:1105px;top:331px;background:#000000;opacity:0.5"></i><i style="left:1106px;top:331px;background:#000000;opacity:0.5"></i><i style="left:1107px;top:331px;background:#000000;opacity:0.5"></i><i style="left:1108px;top:331px;background:#000000;opacity:0.5"></i><i style="left:1109px;top:331px;background:#000000;opacity:0.5"></i><i style="left:1110px;top:331px;background:#7b3814;opacity:0.4"></i><i style="left:1111px;top:331px;background:#a31515;opacity:0.22"></i><i style="left:1112px;top:331px;background:#a31515;opacity:0.62"></i><i style="left:1113px;top:331px;background:#a31515;opacity:0.5"></i><i style="left:1114px;top:331px;background:#a31515;opacity:0.62"></i><i style="left:1115px;top:331px;background:#a31515;opacity:0.5"></i><i style="left:1116px;top:331px;background:#a31515;opacity:0.5"></i><i style="left:1117px;top:331px;background:#a31515;opacity:0.5"></i><i style="left:1118px;top:331px;background:#a31515;opacity:0.62"></i><i style="left:1119px;top:331px;background:#a31515;opacity:0.22"></i><i style="left:1120px;top:331px;background:#000000;opacity:0.22"></i><i style="left:1122px;top:331px;background:#0000ff;opacity:0.5"></i><i style="left:1123px;top:331px;background:#0000ff;opacity:0.5"></i><i style="left:1124px;top:331px;background:#0000ff;opacity:0.5"></i><i style="left:1125px;top:331px;background:#0000ff;opacity:0.5"></i><i style="left:1126px;top:331px;background:#7b3814;opacity:0.4"></i><i style="left:1127px;top:331px;background:#000000;opacity:0.22"></i><i style="left:1087px;top:333px;background:#319331;opacity:0.4"></i><i style="left:1089px;top:333px;background:#0000ff;opacity:0.5"></i><i style="left:1090px;top:333px;background:#0000ff;opacity:0.5"></i><i style="left:1091px;top:333px;background:#0000ff;opacity:0.5"></i><i style="left:1092px;top:333px;background:#0000ff;opacity:0.5"></i><i style="left:1094px;top:333px;background:#319331;opacity:0.4"></i><i style="left:1091px;top:335px;background:#008000;opacity:0.35"></i><i style="left:1092px;top:335px;background:#008000;opacity:0.35"></i><i style="left:1094px;top:335px;background:#008000;opacity:0.5"></i><i style="left:1095px;top:335px;background:#008000;opacity:0.5"></i><i style="left:1096px;top:335px;background:#008000;opacity:0.5"></i><i style="left:1097px;top:335px;background:#008000;opacity:0.5"></i><i style="left:1099px;top:335px;background:#008000;opacity:0.5"></i><i style="left:1100px;top:335px;background:#008000;opacity:0.5"></i><i style="left:1101px;top:335px;background:#008000;opacity:0.5"></i><i style="left:1103px;top:335px;background:#008000;opacity:0.62"></i><i style="left:1104px;top:335px;background:#008000;opacity:0.5"></i><i style="left:1105px;top:335px;background:#008000;opacity:0.5"></i><i style="left:1106px;top:335px;background:#008000;opacity:0.5"></i><i style="left:1108px;top:335px;background:#008000;opacity:0.22"></i><i style="left:1109px;top:335px;background:#008000;opacity:0.62"></i><i style="left:1110px;top:335px;background:#008000;opacity:0.5"></i><i style="left:1112px;top:335px;background:#008000;opacity:0.5"></i><i style="left:1113px;top:335px;background:#008000;opacity:0.5"></i><i style="left:1114px;top:335px;background:#008000;opacity:0.5"></i><i style="left:1115px;top:335px;background:#008000;opacity:0.62"></i><i style="left:1116px;top:335px;background:#008000;opacity:0.22"></i><i style="left:1118px;top:335px;background:#008000;opacity:0.5"></i><i style="left:1119px;top:335px;background:#008000;opacity:0.5"></i><i style="left:1120px;top:335px;background:#008000;opacity:0.5"></i><i style="left:1122px;top:335px;background:#008000;opacity:0.62"></i><i style="left:1123px;top:335px;background:#008000;opacity:0.5"></i><i style="left:1124px;top:335px;background:#008000;opacity:0.5"></i><i style="left:1125px;top:335px;background:#008000;opacity:0.5"></i><i style="left:1126px;top:335px;background:#008000;opacity:0.5"></i><i style="left:1127px;top:335px;background:#008000;opacity:0.5"></i><i style="left:1128px;top:335px;background:#008000;opacity:0.5"></i><i style="left:1129px;top:335px;background:#008000;opacity:0.5"></i><i style="left:1130px;top:335px;background:#008000;opacity:0.5"></i><i style="left:1091px;top:337px;background:#000000;opacity:0.62"></i><i style="left:1092px;top:337px;background:#000000;opacity:0.62"></i><i style="left:1093px;top:337px;background:#000000;opacity:0.5"></i><i style="left:1094px;top:337px;background:#000000;opacity:0.5"></i><i style="left:1095px;top:337px;background:#000000;opacity:0.5"></i><i style="left:1096px;top:337px;background:#000000;opacity:0.62"></i><i style="left:1097px;top:337px;background:#000000;opacity:0.22"></i><i style="left:1098px;top:337px;background:#000000;opacity:0.5"></i><i style="left:1099px;top:337px;background:#000000;opacity:0.5"></i><i style="left:1100px;top:337px;background:#000000;opacity:0.5"></i><i style="left:1101px;top:337px;background:#000000;opacity:0.5"></i><i style="left:1102px;top:337px;background:#000000;opacity:0.5"></i><i style="left:1103px;top:337px;background:#000000;opacity:0.5"></i><i style="left:1104px;top:337px;background:#000000;opacity:0.5"></i><i style="left:1105px;top:337px;background:#000000;opacity:0.5"></i><i style="left:1106px;top:337px;background:#000000;opacity:0.5"></i><i style="left:1107px;top:337px;background:#000000;opacity:0.5"></i><i style="left:1108px;top:337px;background:#7b3814;opacity:0.4"></i><i style="left:1109px;top:337px;background:#a31515;opacity:0.22"></i><i style="left:1110px;top:337px;background:#a31515;opacity:0.62"></i><i style="left:1111px;top:337px;background:#a31515;opacity:0.5"></i><i style="left:1112px;top:337px;background:#a31515;opacity:0.62"></i><i style="left:1113px;top:337px;background:#a31515;opacity:0.5"></i><i style="left:1114px;top:337px;background:#a31515;opacity:0.5"></i><i style="left:1115px;top:337px;background:#a31515;opacity:0.5"></i><i style="left:1116px;top:337px;background:#a31515;opacity:0.62"></i><i style="left:1117px;top:337px;background:#a31515;opacity:0.22"></i><i style="left:1118px;top:337px;background:#000000;opacity:0.22"></i><i style="left:1120px;top:337px;background:#0000ff;opacity:0.5"></i><i style="left:1121px;top:337px;background:#0000ff;opacity:0.5"></i><i style="left:1122px;top:337px;background:#0000ff;opacity:0.5"></i><i style="left:1123px;top:337px;background:#0000ff;opacity:0.5"></i><i style="left:1124px;top:337px;background:#0000ff;opacity:0.5"></i><i style="left:1125px;top:337px;background:#7b3814;opacity:0.4"></i><i style="left:1126px;top:337px;background:#000000;opacity:0.22"></i><i style="left:1091px;top:339px;background:#000000;opacity:0.62"></i><i style="left:1092px;top:339px;background:#000000;opacity:0.62"></i><i style="left:1093px;top:339px;background:#000000;opacity:0.5"></i><i style="left:1094px;top:339px;background:#000000;opacity:0.5"></i><i style="left:1095px;top:339px;background:#000000;opacity:0.5"></i><i style="left:1096px;top:339px;background:#000000;opacity:0.62"></i><i style="left:1097px;top:339px;background:#000000;opacity:0.22"></i><i style="left:1098px;top:339px;background:#000000;opacity:0.5"></i><i style="left:1099px;top:339px;background:#000000;opacity:0.5"></i><i style="left:1100px;top:339px;background:#000000;opacity:0.5"></i><i style="left:1101px;top:339px;background:#000000;opacity:0.62"></i><i style="left:1102px;top:339px;background:#000000;opacity:0.5"></i><i style="left:1103px;top:339px;background:#000000;opacity:0.5"></i><i style="left:1104px;top:339px;background:#000000;opacity:0.5"></i><i style="left:1105px;top:339px;background:#000000;opacity:0.5"></i><i style="left:1106px;top:339px;background:#000000;opacity:0.5"></i><i style="left:1107px;top:339px;background:#000000;opacity:0.5"></i><i style="left:1108px;top:339px;background:#000000;opacity:0.5"></i><i style="left:1109px;top:339px;background:#000000;opacity:0.5"></i><i style="left:1110px;top:339px;background:#7b3814;opacity:0.4"></i><i style="left:1111px;top:339px;background:#a31515;opacity:0.22"></i><i style="left:1112px;top:339px;background:#a31515;opacity:0.62"></i><i style="left:1113px;top:339px;background:#a31515;opacity:0.5"></i><i style="left:1114px;top:339px;background:#a31515;opacity:0.62"></i><i style="left:1115px;top:339px;background:#a31515;opacity:0.5"></i><i style="left:1116px;top:339px;background:#a31515;opacity:0.5"></i><i style="left:1117px;top:339px;background:#a31515;opacity:0.5"></i><i style="left:1118px;top:339px;background:#a31515;opacity:0.62"></i><i style="left:1119px;top:339px;background:#a31515;opacity:0.22"></i><i style="left:1120px;top:339px;background:#000000;opacity:0.22"></i><i style="left:1122px;top:339px;background:#0000ff;opacity:0.5"></i><i style="left:1123px;top:339px;background:#0000ff;opacity:0.5"></i><i style="left:1124px;top:339px;background:#0000ff;opacity:0.5"></i><i style="left:1125px;top:339px;background:#0000ff;opacity:0.5"></i><i style="left:1126px;top:339px;background:#0000ff;opacity:0.5"></i><i style="left:1127px;top:339px;background:#7b3814;opacity:0.4"></i><i style="left:1128px;top:339px;background:#000000;opacity:0.22"></i><i style="left:1087px;top:341px;background:#319331;opacity:0.4"></i><i style="left:1083px;top:343px;background:#0431fa;opacity:0.4"></i></div>
<div style="position:absolute;left:1195px;top:303px;width:1px;height:416px;background:#d4d4d4"></div>
<div style="position:absolute;left:123px;top:719px;width:1088px;height:1px;background:#7b8292"></div>
</body></html>
